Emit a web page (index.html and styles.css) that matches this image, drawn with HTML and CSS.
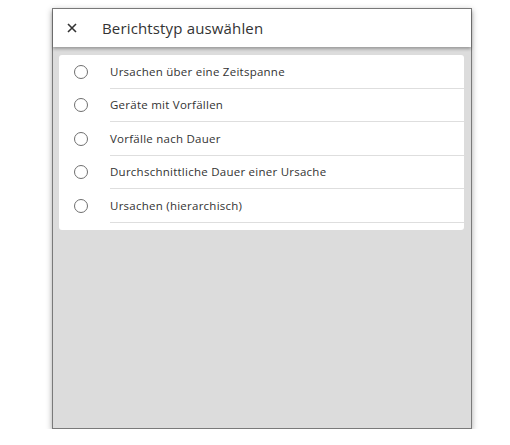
FILE: index.html
```html
<!DOCTYPE html>
<html lang="de">
<head>
<meta charset="utf-8">
<link rel="stylesheet" href="styles.css">
</head>
<body>
<div class="dialog">
  <header class="dialog-header">
    <svg class="close-icon" width="10" height="10" viewBox="0 0 10 10"><path d="M1 1L9 9M9 1L1 9" stroke="#333" stroke-width="1.6" fill="none"/></svg>
    <h1 class="title">Berichtstyp auswählen</h1>
  </header>
  <div class="dialog-body">
    <ul class="options">
      <li class="option"><span class="radio"></span><span class="label">Ursachen über eine Zeitspanne</span></li>
      <li class="option"><span class="radio"></span><span class="label">Geräte mit Vorfällen</span></li>
      <li class="option"><span class="radio"></span><span class="label">Vorfälle nach Dauer</span></li>
      <li class="option"><span class="radio"></span><span class="label">Durchschnittliche Dauer einer Ursache</span></li>
      <li class="option"><span class="radio"></span><span class="label">Ursachen (hierarchisch)</span></li>
    </ul>
  </div>
</div>
</body>
</html>
```
FILE: styles.css
```css
* { box-sizing: border-box; }
html, body { margin: 0; padding: 0; background: #fff; }
body { font-family: "Open Sans", "DejaVu Sans", sans-serif; color: #333; }
.dialog {
  margin: 8px 0 0 52px;
  width: 420px;
  height: 421px;
  border: 1px solid #7a7a7a;
  background: #dcdcdc;
  box-shadow: 0 2px 6px rgba(0,0,0,0.35);
  display: flex;
  flex-direction: column;
}
.dialog-header {
  height: 38px;
  background: #fff;
  display: flex;
  align-items: center;
  padding-left: 14px;
  box-shadow: 0 2px 3px rgba(0,0,0,0.3);
  position: relative;
  z-index: 1;
  flex: none;
}
.close-icon { flex: none; }
.title {
  margin: 0 0 0 25px;
  font-size: 15px;
  font-weight: 400;
  color: #333;
  letter-spacing: 0.15px;
}
.dialog-body { padding: 8px 7px 0 6px; }
.options {
  list-style: none;
  margin: 0;
  padding: 0 0 7px 0;
  background: #fff;
  border-radius: 3px;
}
.option {
  display: flex;
  align-items: center;
  height: 33.5px;
  padding-left: 15px;
}
.radio {
  width: 14px;
  height: 14px;
  border: 1.2px solid #6f6f6f;
  border-radius: 50%;
  flex: none;
  margin-right: 22px;
}
.label {
  flex: 1;
  height: 100%;
  display: flex;
  align-items: center;
  border-bottom: 1px solid #dedede;
  font-size: 11.5px;
  color: #333;
  letter-spacing: 0.25px;
}
```
